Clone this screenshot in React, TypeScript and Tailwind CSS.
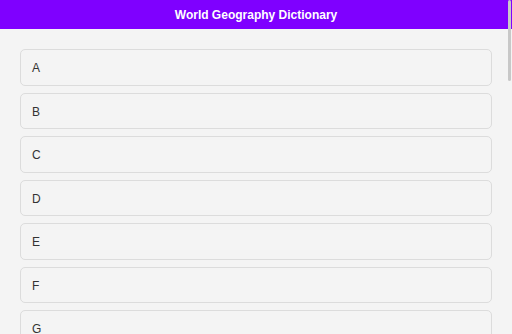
const letters = 'ABCDEFGHIJKLMNOPQRSTUVWXYZ'.split('');

export default function App() {
  return (
    <div className="min-h-screen bg-[#f4f4f4] font-['Liberation_Sans',Arial,sans-serif]">
      <header className="h-[29px] bg-[#7f00ff] flex items-center justify-center">
        <h1 className="text-white text-[12px] font-bold">World Geography Dictionary</h1>
      </header>
      <main className="px-5 pt-5 pb-5 flex flex-col gap-[7px]">
        {letters.map(letter => (
          <div
            key={letter}
            className="h-[36.5px] flex items-center px-[11px] pt-[2px] border border-[#dcdcdc] rounded-[5px] bg-[#f4f4f4] text-[12px] text-[#333]"
          >
            {letter}
          </div>
        ))}
      </main>
      {/* overlay scrollbar thumb */}
      <div className="fixed top-0 right-[1px] w-[3px] h-[81px] rounded-full bg-[#c8c8c8]" />
    </div>
  );
}
